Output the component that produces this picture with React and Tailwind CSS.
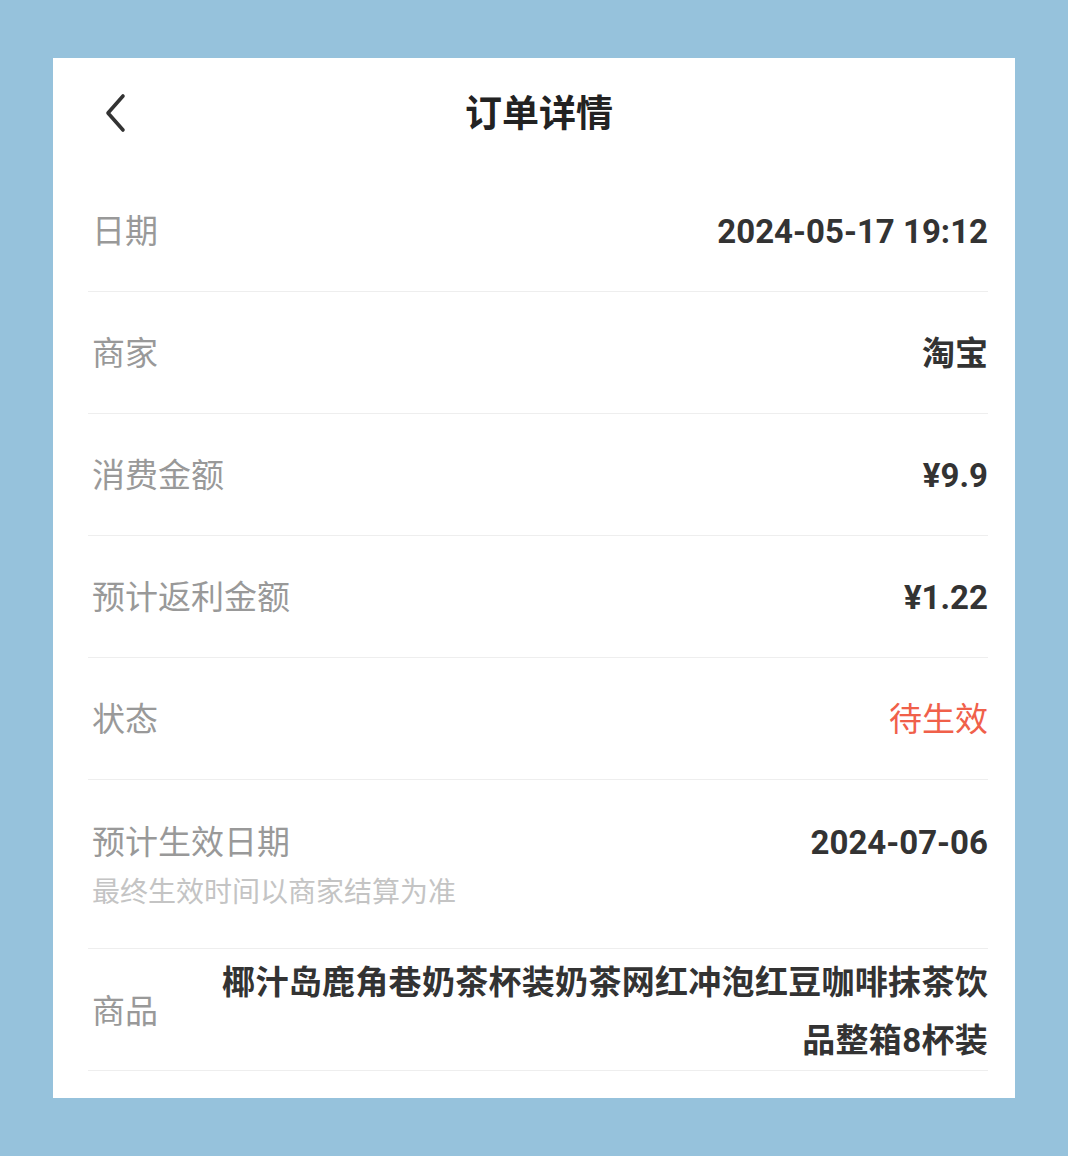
import React from "react";

const font = { fontFamily: "Roboto, 'Noto Sans CJK SC', sans-serif" };

function Row({ label, value, valueClass = "text-[#333333] font-bold" }) {
  return (
    <div className="flex items-center justify-between border-b border-[#eeeeee] pt-[40px] pb-[37px]">
      <span className="pl-[4px] text-[33px] leading-[44px] text-[#999999]">{label}</span>
      <span className={`text-[33px] leading-[44px] ${valueClass}`}>{value}</span>
    </div>
  );
}

export default function App() {
  return (
    <div className="min-h-[1156px] w-full bg-[#96c2dc] pt-[58px] pl-[53px]" style={font}>
      <div className="w-[962px] h-[1040px] bg-white pl-[35px] pr-[27px]">
        <div className="relative flex h-[112px] items-center justify-center">
          <svg
            className="absolute left-[15px] top-[35px]"
            width="26"
            height="40"
            viewBox="0 0 26 40"
            fill="none"
          >
            <path d="M20 3 L5 20 L20 37" stroke="#333333" strokeWidth="3.6" strokeLinecap="round" strokeLinejoin="round" />
          </svg>
          <span className="pl-[2px] text-[37px] font-bold text-[#222222] leading-none">订单详情</span>
        </div>
        <Row label="日期" value="2024-05-17 19:12" />
        <Row label="商家" value="淘宝" />
        <Row label="消费金额" value="¥9.9" />
        <Row label="预计返利金额" value="¥1.22" />
        <Row label="状态" value="待生效" valueClass="text-[#f0604a]" />
        <div className="flex items-start justify-between border-b border-[#eeeeee] pt-[41px] pb-[35px]">
          <div className="flex flex-col pl-[4px]">
            <span className="text-[33px] leading-[44px] text-[#999999]">预计生效日期</span>
            <span className="mt-[8px] text-[28px] leading-[40px] text-[#c4c4c4]">最终生效时间以商家结算为准</span>
          </div>
          <span className="text-[33px] leading-[44px] font-bold text-[#333333]">2024-07-06</span>
        </div>
        <div className="flex items-center border-b border-[#eeeeee] pt-[5px]">
          <span className="pl-[4px] text-[33px] leading-[44px] text-[#999999] shrink-0">商品</span>
          <span className="ml-[42px] flex-1 text-right text-[33px] leading-[58px] tracking-[0.3px] font-bold text-[#333333]">
            椰汁岛鹿角巷奶茶杯装奶茶网红冲泡红豆咖啡抹茶饮品整箱8杯装
          </span>
        </div>
      </div>
    </div>
  );
}
